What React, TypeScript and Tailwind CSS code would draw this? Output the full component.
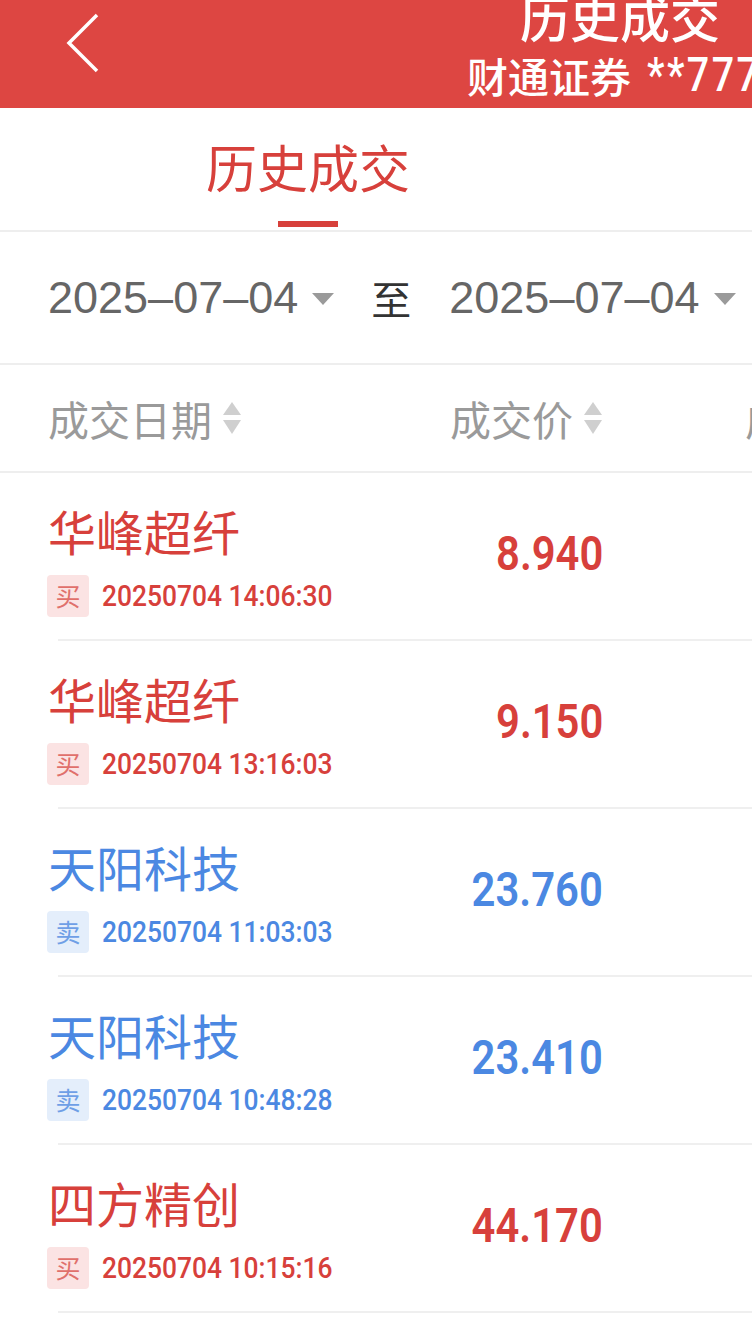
import React from "react";

type Trade = {
  name: string;
  side: "买" | "卖";
  time: string;
  price: string;
};

const trades: Trade[] = [
  { name: "华峰超纤", side: "买", time: "20250704 14:06:30", price: "8.940" },
  { name: "华峰超纤", side: "买", time: "20250704 13:16:03", price: "9.150" },
  { name: "天阳科技", side: "卖", time: "20250704 11:03:03", price: "23.760" },
  { name: "天阳科技", side: "卖", time: "20250704 10:48:28", price: "23.410" },
  { name: "四方精创", side: "买", time: "20250704 10:15:16", price: "44.170" },
];

const cjk = "font-['Noto_Sans_CJK_SC','Noto_Sans',sans-serif]";
const num = "font-['Roboto','Noto_Sans_CJK_SC',sans-serif]";

function Caret() {
  return (
    <svg width="24" height="14" viewBox="0 0 24 14" className="shrink-0">
      <path d="M1 1 H23 L12 13 Z" fill="#9a9a9a" />
    </svg>
  );
}

function SortIcon() {
  return (
    <svg width="20" height="36" viewBox="0 0 20 36" className="shrink-0">
      <path d="M10 2 L19 15 H1 Z" fill="#cfcfcf" />
      <path d="M1 20 H19 L10 34 Z" fill="#cfcfcf" />
    </svg>
  );
}

function TradeRow({ t }: { t: Trade }) {
  const buy = t.side === "买";
  const color = buy ? "text-[#d7403b]" : "text-[#4b88e2]";
  return (
    <div className="flex h-[168px] border-b-2 border-[#efefef] ml-[58px] whitespace-nowrap">
      <div className="flex flex-col w-[330px] shrink-0 -ml-[10px] pt-[32px]">
        <div className={`${cjk} ${color} text-[48px] leading-[50px]`}>{t.name}</div>
        <div className="flex items-center mt-[20px] -ml-px">
          <div
            className={`${cjk} w-[42px] h-[42px] rounded-[4px] flex items-center justify-center text-[25px] ${
              buy ? "bg-[#fbe3e3] text-[#e0706b]" : "bg-[#e4eefb] text-[#6f9fe6]"
            }`}
          >
            {t.side}
          </div>
          <div
            className={`${num} ${color} ml-[13px] text-[30px] font-medium leading-none scale-x-[0.88] origin-left`}
          >
            {t.time}
          </div>
        </div>
      </div>
      <div className="w-[225px] shrink-0 flex items-center justify-end pb-[4px]">
        <div
          className={`${num} ${color} text-[48px] font-semibold leading-none scale-x-[0.87] origin-right`}
        >
          {t.price}
        </div>
      </div>
    </div>
  );
}

export default function App() {
  return (
    <div className="w-[752px] h-[1342px] overflow-hidden bg-white">
      {/* top bar */}
      <div className="h-[108px] bg-[#dd4642] flex justify-between overflow-hidden whitespace-nowrap">
        <div className="pl-[64px] pt-[13px] shrink-0">
          <svg width="40" height="60" viewBox="0 0 40 60">
            <path d="M33 2 L5 30 L33 58" fill="none" stroke="#ffffff" strokeWidth="3.5" />
          </svg>
        </div>
        <div className="flex flex-col items-end shrink-0 -mr-[6px]">
          <div className={`${cjk} text-white text-[50px] font-medium leading-[50px] -mt-[9px] mr-[38px]`}>
            历史成交
          </div>
          <div className="flex items-center text-white mt-[9px] h-[50px] w-[300px] -mr-[10px]">
            <span className={`${cjk} text-[41px] leading-none font-medium -ml-[1px]`}>财通证券</span>
            <span
              className={`${num} text-[48px] leading-none font-medium ml-[16px] tracking-[3px] scale-x-[0.82] origin-left`}
            >
              **777
            </span>
          </div>
        </div>
      </div>

      {/* tab */}
      <div className="h-[124px] border-b-2 border-[#eeeeee] flex">
        <div className="ml-[206px] flex flex-col items-center pt-[28px]">
          <div className={`${cjk} text-[#d7403b] text-[51px] leading-[60px]`}>历史成交</div>
          <div className="mt-[25px] w-[60px] h-[6px] bg-[#d7403b]" />
        </div>
      </div>

      {/* date range */}
      <div className="h-[133px] border-b-2 border-[#eeeeee] flex items-center pl-[48px] whitespace-nowrap">
        <span className="font-['Liberation_Sans',sans-serif] text-[#666666] text-[45px] leading-none">
          2025–07–04
        </span>
        <span className="ml-[13px] mt-[2px]">
          <Caret />
        </span>
        <span className={`${cjk} ml-[36px] text-[#333333] text-[40px] leading-none`}>至</span>
        <span className="ml-[38px] font-['Liberation_Sans',sans-serif] text-[#666666] text-[45px] leading-none">
          2025–07–04
        </span>
        <span className="ml-[13px] mt-[2px]">
          <Caret />
        </span>
      </div>

      {/* column header */}
      <div className="h-[108px] border-b-2 border-[#eeeeee] flex items-center pl-[48px] whitespace-nowrap overflow-hidden">
        <div className="flex items-center w-[402px] shrink-0">
          <span className={`${cjk} text-[#9a9a9a] text-[41px] leading-none`}>成交日期</span>
          <span className="ml-[10px]">
            <SortIcon />
          </span>
        </div>
        <div className="flex items-center w-[295px] shrink-0">
          <span className={`${cjk} text-[#9a9a9a] text-[41px] leading-none`}>成交价</span>
          <span className="ml-[10px]">
            <SortIcon />
          </span>
        </div>
        <span className={`${cjk} text-[#9a9a9a] text-[41px] leading-none shrink-0`}>成交量</span>
      </div>

      {trades.map((t, i) => (
        <TradeRow key={i} t={t} />
      ))}
    </div>
  );
}
